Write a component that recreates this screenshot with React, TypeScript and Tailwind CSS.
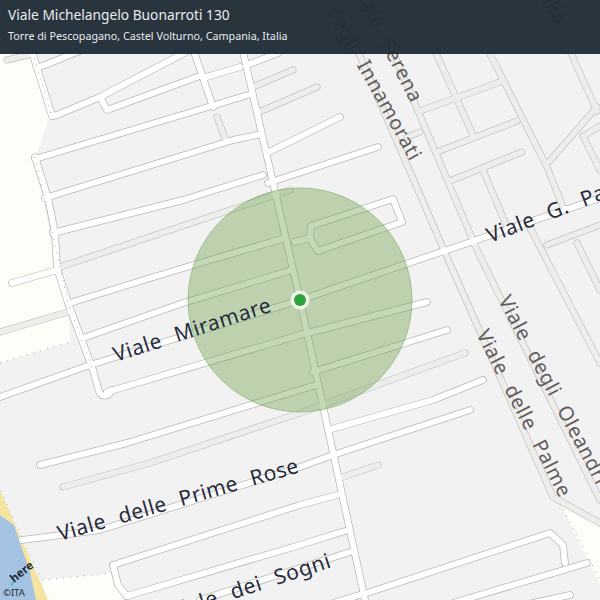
const major: string[] = [
  "30,45 52,116",
  "35,157 48,198 55,233 57,268 68,303 93,370 98,388 C100,398 108,398 112,390",
  "238,30 300,300 365,600",
  "190,40 213,107",
  "57,115 C50,117 52,116 57,115 L100,97 190,50",
  "100,97 107,110 197,77",
  "35,159 248,95",
  "40,67 82,50",
  "203,78 240,67",
  "247,65 278,53",
  "45,198 233,140 257,135",
  "267,153 340,117",
  "53,233 183,200 263,175",
  "268,183 378,147",
  "12,283 57,270",
  "70,303 147,279 200,263 285,238",
  "295,242 310,238 311,226 393,199 402,222 318,251 311,240",
  "0,397 90,365 300,300 600,198",
  "83,338 183,303 292,270",
  "107,392 300,335 427,302",
  "40,465 127,443 257,403 316,385",
  "313,372 447,330",
  "328,430 433,400 483,380",
  "333,455 470,410",
  "22,540 100,530 300,467 333,455",
  "113,565 300,505 337,495",
  "113,565 118,585 127,596",
  "127,596 300,545 345,531",
  "200,600 300,568 350,552",
  "333,603 363,594",
  "367,593 550,533 563,545 565,563",
  "453,603 587,563",
  "533,603 570,595",
];

const minor: string[] = [
  "7,60 28,55",
  "253,87 293,70",
  "257,113 317,87",
  "217,117 225,138",
  "57,268 290,190",
  "0,332 68,312",
  "63,487 150,463 300,413 465,353",
  "340,478 378,465",
  "353,40 447,257 553,497 600,523",
  "388,40 477,250 600,500",
  "430,40 473,135",
  "483,40 547,167 563,207",
  "577,243 600,290",
  "527,222 600,363",
  "483,170 507,227",
  "420,111 500,82",
  "407,137 420,132",
  "437,152 517,121",
  "450,181 522,152",
  "547,164 597,107",
  "565,40 597,111",
  "583,136 600,170",
  "587,134 600,126",
  "547,245 600,225",
];

const labels = [
  { t: "Viale Miramare", x: 116, y: 362, r: -18, c: "#272b3c", s: 21, ls: 0.6 },
  { t: "Viale delle Prime Rose", x: 60, y: 541, r: -16, c: "#272b3c", s: 21, ls: 0.4 },
  { t: "Viale G. Pa", x: 490, y: 243, r: -21, c: "#272b3c", s: 21, ls: 0.6 },
  { t: "Viale dei Sogni", x: 172, y: 619, r: -18, c: "#272b3c", s: 21, ls: 0.6 },
  { t: "degli Innamorati", x: 326, y: 10, r: 61, c: "#625c5c", s: 20, ls: 0.6 },
  { t: "Viale Serena", x: 352, y: -12, r: 63, c: "#625c5c", s: 20, ls: 0.6 },
  { t: "Italia", x: 532, y: -18, r: 62, c: "#625c5c", s: 20, ls: 0.6 },
  { t: "Viale degli Oleandri", x: 498, y: 300, r: 62, c: "#625c5c", s: 20, ls: 0.6 },
  { t: "Viale delle Palme", x: 476, y: 334, r: 63, c: "#625c5c", s: 20, ls: 0.6 },
];

function toD(p: string) {
  return p.includes("C") || p.includes("L") ? "M" + p : "M" + p.replace(/ /g, " L");
}

export default function App() {
  return (
    <div className="relative h-[600px] w-[600px] overflow-hidden bg-[#f3f2f2]">
      <svg className="absolute inset-0 block" width="600" height="600" viewBox="0 0 600 600">
        <path d="M0 40 L28 40 L50 115 L36 155 L55 265 L68 303 L70 342 L0 363 Z" fill="#fbfff8" />
        <path d="M560 503 L600 527 L600 585 Z" fill="#fbfff8" />
        <path d="M42 580 L112 573 L122 600 L47 600 Z" fill="#fbfff8" />
        <path d="M0 490 L48 600 L0 600 Z" fill="#f5e49f" />
        <path d="M0 515 L14 525 L30 572 L36 600 L0 600 Z" fill="#a4c3e2" />
        <path d="M0 363 L70 342 M1 491 L42 580 L112 573 M560 503 L600 580" fill="none" stroke="#a9a9a7" strokeWidth="1" strokeDasharray="1 6" />

        <g fill="none" strokeLinecap="round" strokeLinejoin="round">
          {minor.map((d, i) => <path key={"a" + i} d={toD(d)} stroke="#c2c2c0" strokeWidth="7" />)}
          {major.map((d, i) => <path key={"b" + i} d={toD(d)} stroke="#b8b8b6" strokeWidth="7.5" />)}
          {minor.map((d, i) => <path key={"c" + i} d={toD(d)} stroke="#ededeb" strokeWidth="5.6" />)}
          {major.map((d, i) => <path key={"d" + i} d={toD(d)} stroke="#ffffff" strokeWidth="6" />)}
        </g>
        <path d="M30 45 L52 116 M35 157 L68 303 L93 370" fill="none" stroke="#a9a9a7" strokeWidth="1" strokeDasharray="1 6" />

        <circle cx="300" cy="300" r="112" fill="#6b9f4c" fillOpacity="0.4" stroke="#7fa869" strokeOpacity="0.6" />
        <circle cx="300" cy="300" r="9.5" fill="#ffffff" fillOpacity="0.75" />
        <circle cx="300" cy="300" r="6" fill="#2ea33c" />

        {labels.map((l) => (
          <text
            key={l.t}
            x={l.x}
            y={l.y}
            transform={`rotate(${l.r} ${l.x} ${l.y})`}
            fill={l.c}
            fontSize={l.s}
            letterSpacing={l.ls}
            wordSpacing="8"
            fontFamily="'Noto Sans', sans-serif"
          >
            {l.t}
          </text>
        ))}

        <path d="M11 585 L14 582" stroke="#3cc4c8" strokeWidth="2" />
        <text x="14" y="583" transform="rotate(-39 14 583)" fill="#20283a" fontSize="11.5" fontWeight="700" fontFamily="'Noto Sans', sans-serif">here</text>
        <text x="3" y="596" fill="#1e2a36" fontSize="9.5" fontFamily="'Noto Sans', sans-serif">©ITA</text>
      </svg>

      <div className="absolute inset-x-0 top-0 flex h-[54px] flex-col gap-[5px] bg-[#212d38]/[.97] px-2 pt-[6px] font-['Noto_Sans',sans-serif] text-[#e8ebee]">
        <div className="text-[13.75px] leading-[18px] whitespace-nowrap">Viale Michelangelo Buonarroti 130</div>
        <div className="text-[10.75px] leading-[14px] whitespace-nowrap">Torre di Pescopagano, Castel Volturno, Campania, Italia</div>
      </div>
    </div>
  );
}
